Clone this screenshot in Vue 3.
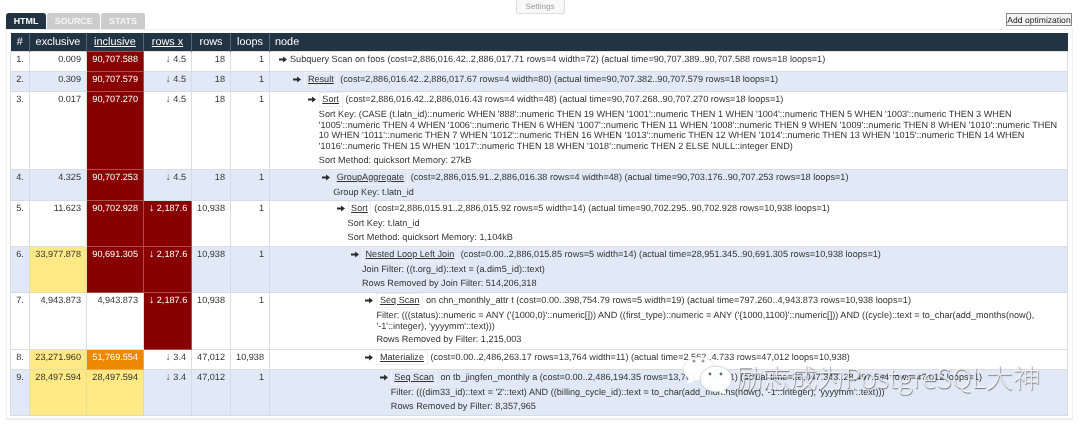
<script setup>
const rows = [
  { n: '1.', ex: '0.009', inc: '90,707.588', incC: 'red', rx: '4.5', rows: '18', loops: '1', lvl: 0, plain: 'Subquery Scan on foos', info: '(cost=2,886,016.42..2,886,017.71 rows=4 width=72) (actual time=90,707.389..90,707.588 rows=18 loops=1)', details: [], h: 20 },
  { n: '2.', alt: true, ex: '0.309', inc: '90,707.579', incC: 'red', rx: '4.5', rows: '18', loops: '1', lvl: 1, name: 'Result', info: '(cost=2,886,016.42..2,886,017.67 rows=4 width=80) (actual time=90,707.382..90,707.579 rows=18 loops=1)', details: [], h: 20 },
  { n: '3.', ex: '0.017', inc: '90,707.270', incC: 'red', rx: '4.5', rows: '18', loops: '1', lvl: 2, name: 'Sort', info: '(cost=2,886,016.42..2,886,016.43 rows=4 width=48) (actual time=90,707.268..90,707.270 rows=18 loops=1)', details: ["Sort Key: (CASE (t.latn_id)::numeric WHEN '888'::numeric THEN 19 WHEN '1001'::numeric THEN 1 WHEN '1004'::numeric THEN 5 WHEN '1003'::numeric THEN 3 WHEN '1005'::numeric THEN 4 WHEN '1006'::numeric THEN 6 WHEN '1007'::numeric THEN 11 WHEN '1008'::numeric THEN 9 WHEN '1009'::numeric THEN 8 WHEN '1010'::numeric THEN 10 WHEN '1011'::numeric THEN 7 WHEN '1012'::numeric THEN 16 WHEN '1013'::numeric THEN 12 WHEN '1014'::numeric THEN 13 WHEN '1015'::numeric THEN 14 WHEN '1016'::numeric THEN 15 WHEN '1017'::numeric THEN 18 WHEN '1018'::numeric THEN 2 ELSE NULL::integer END)", 'Sort Method: quicksort Memory: 27kB'], h: 78 },
  { n: '4.', alt: true, ex: '4.325', inc: '90,707.253', incC: 'red', rx: '4.5', rows: '18', loops: '1', lvl: 3, name: 'GroupAggregate', info: '(cost=2,886,015.91..2,886,016.38 rows=4 width=48) (actual time=90,703.176..90,707.253 rows=18 loops=1)', details: ['Group Key: t.latn_id'], h: 31 },
  { n: '5.', ex: '11.623', inc: '90,702.928', incC: 'red', rx: '2,187.6', rxC: 'red', rows: '10,938', loops: '1', lvl: 4, name: 'Sort', info: '(cost=2,886,015.91..2,886,015.92 rows=5 width=14) (actual time=90,702.295..90,702.928 rows=10,938 loops=1)', details: ['Sort Key: t.latn_id', 'Sort Method: quicksort Memory: 1,104kB'], h: 46 },
  { n: '6.', alt: true, ex: '33,977.878', exC: 'yellow', inc: '90,691.305', incC: 'red', rx: '2,187.6', rxC: 'red', rows: '10,938', loops: '1', lvl: 5, name: 'Nested Loop Left Join', info: '(cost=0.00..2,886,015.85 rows=5 width=14) (actual time=28,951.345..90,691.305 rows=10,938 loops=1)', details: ['Join Filter: ((t.org_id)::text = (a.dim5_id)::text)', 'Rows Removed by Join Filter: 514,206,318'], h: 46 },
  { n: '7.', ex: '4,943.873', inc: '4,943.873', rx: '2,187.6', rxC: 'red', rows: '10,938', loops: '1', lvl: 6, name: 'Seq Scan', info: 'on chn_monthly_attr t (cost=0.00..398,754.79 rows=5 width=19) (actual time=797.260..4,943.873 rows=10,938 loops=1)', details: ["Filter: (((status)::numeric = ANY ('{1000,0}'::numeric[])) AND ((first_type)::numeric = ANY ('{1000,1100}'::numeric[])) AND ((cycle)::text = to_char(add_months(now(), '-1'::integer), 'yyyymm'::text)))", 'Rows Removed by Filter: 1,215,003'], h: 57 },
  { n: '8.', ex: '23,271.960', exC: 'yellow', inc: '51,769.554', incC: 'orange', rx: '3.4', rows: '47,012', loops: '10,938', lvl: 6, name: 'Materialize', info: '(cost=0.00..2,486,263.17 rows=13,764 width=11) (actual time=2.562..4.733 rows=47,012 loops=10,938)', details: [], h: 20 },
  { n: '9.', alt: true, ex: '28,497.594', exC: 'yellow', inc: '28,497.594', incC: 'yellow', rx: '3.4', rows: '47,012', loops: '1', lvl: 7, name: 'Seq Scan', info: 'on tb_jingfen_monthly a (cost=0.00..2,486,194.35 rows=13,764 width=11) (actual time=28,047.343..28,497.594 rows=47,012 loops=1)', details: ["Filter: (((dim33_id)::text = '2'::text) AND ((billing_cycle_id)::text = to_char(add_months(now(), '-1'::integer), 'yyyymm'::text)))", 'Rows Removed by Filter: 8,357,965'], h: 46 }
]
</script>

<template>
  <div class="page">
    <div class="settings-row"><button class="settings">Settings</button></div>
    <div class="tabs-row">
      <div class="tabs">
        <span class="tab active">HTML</span>
        <span class="tab">SOURCE</span>
        <span class="tab">STATS</span>
      </div>
      <button class="add">Add optimization</button>
    </div>
    <div class="panel">
      <table>
        <colgroup>
          <col class="c-num" /><col class="c-time" /><col class="c-time" /><col class="c-rx" /><col class="c-count" /><col class="c-count" /><col />
        </colgroup>
        <thead>
          <tr>
            <th>#</th><th>exclusive</th><th><u>inclusive</u></th><th><u>rows x</u></th><th>rows</th><th>loops</th><th class="left">node</th>
          </tr>
        </thead>
        <tbody>
          <tr v-for="r in rows" :key="r.n" :class="{ alt: r.alt }" :style="{ height: r.h + 'px' }">
            <td class="num">{{ r.n }}</td>
            <td :class="r.exC">{{ r.ex }}</td>
            <td :class="r.incC">{{ r.inc }}</td>
            <td :class="r.rxC"><span class="down">↓</span> {{ r.rx }}</td>
            <td>{{ r.rows }}</td>
            <td>{{ r.loops }}</td>
            <td class="node">
              <div :style="{ paddingLeft: r.lvl * 14.4 + 'px' }">
                <div class="line">
                  <svg class="arrow" viewBox="0 0 9 7" width="8" height="7"><path d="M0 2.4h4.6V0L9 3.5 4.6 7V4.6H0z" fill="#2b2b2b" /></svg>
                  <template v-if="r.plain">{{ r.plain }} {{ r.info }}</template>
                  <template v-else><span class="name">{{ r.name }}</span>{{ r.info }}</template>
                </div>
                <p v-for="d in r.details" :key="d" class="detail">{{ d }}</p>
              </div>
            </td>
          </tr>
        </tbody>
      </table>
    </div>
    <div class="mark">
      <svg width="56" height="42" viewBox="0 0 56 42" class="bubble">
        <ellipse cx="19" cy="14" rx="16" ry="12" fill="rgba(255,255,255,.95)" stroke="#ccc" stroke-width=".5" />
        <path d="M9 22l-2 7 8-4z" fill="rgba(255,255,255,.95)" />
        <ellipse cx="36" cy="24" rx="16" ry="13" fill="rgba(255,255,255,.97)" stroke="#aaa" stroke-width=".5" />
        <path d="M44 34l3 6-8-3z" fill="rgba(255,255,255,.97)" />
        <circle cx="14" cy="6" r="1.5" fill="#999" /><circle cx="23" cy="6" r="1.5" fill="#999" />
        <circle cx="30" cy="19" r="1.4" fill="#666" /><circle cx="41" cy="19" r="1.4" fill="#666" />
      </svg>
      <span class="mark-text">励志成为PostgreSQL大神</span>
    </div>
  </div>
</template>

<style scoped>
.page {
  position: relative;
  width: 1080px;
  height: 426px;
  overflow: hidden;
  font-family: "Liberation Sans", Arial, sans-serif;
  font-size: 9.13px;
  text-rendering: geometricPrecision;
  color: #333;
  background: #fff;
  filter: blur(0.35px);
}
.settings-row {
  display: flex;
  justify-content: center;
  height: 13px;
}
.settings {
  width: 49px;
  height: 15px;
  margin-top: -1px;
  padding: 0;
  border: 1px solid #ddd;
  border-radius: 2px;
  background: #f8f8f8;
  color: #999;
  font: 8px "Liberation Sans", sans-serif;
  text-rendering: geometricPrecision;
}
.tabs-row {
  display: flex;
  justify-content: space-between;
  align-items: flex-end;
  height: 16px;
  padding: 0 8px 0 6px;
}
.tabs {
  display: flex;
  gap: 1px;
}
.tab {
  height: 16px;
  padding: 0 7.7px;
  border-radius: 3px 3px 0 0;
  background: #ccc;
  color: #f4f4f4;
  font-weight: 700;
  font-size: 8.9px;
  line-height: 16px;
}
.tab.active {
  background: #223344;
  color: #fff;
}
.add {
  width: 66px;
  height: 13px;
  margin-bottom: 3px;
  padding: 0;
  border: 1px solid #888;
  background: #f4f4f4;
  color: #222;
  font: 8.57px "Liberation Sans", sans-serif;
  text-rendering: geometricPrecision;
}
.panel {
  width: 1067px;
  height: 391px;
  margin-left: 6px;
  padding: 3px 4px 4px 3px;
  box-sizing: border-box;
  border: 1px solid #eee;
  border-bottom-width: 2px;
}
table {
  width: 1058px;
  table-layout: fixed;
  border-collapse: collapse;
}
.c-num { width: 19px; }
.c-time { width: 57px; }
.c-rx { width: 48px; }
.c-count { width: 39px; }
th {
  height: 18px;
  padding: 0;
  background: #223344;
  color: #fff;
  font-weight: 400;
  font-size: 10.9px;
  text-align: center;
  border-left: 1px solid #55667a;
}
th:first-child { border-left: 0; }
th.left { text-align: left; padding-left: 5px; }
td {
  padding: 1px 5px 0;
  vertical-align: top;
  text-align: right;
  line-height: 13px;
  border: 1px solid #ddd;
  white-space: nowrap;
  overflow: hidden;
}
.alt td { background: #e1e9f6; border-color: #d4dce8; }
td.num { padding: 1px 0 0; text-align: center; }
td.red { background: #880000 !important; color: #fff; border-color: #a85050; }
td.orange { background: #ee8800 !important; color: #fff; border-color: #f0a850; }
td.yellow { background: #ffe985 !important; border-color: #e8dc9c; }
.down { color: #666; font-size: 10.5px; }
td.red .down { color: #fff; }
td.node {
  padding: 1px 5px 0 9px;
  text-align: left;
  white-space: normal;
}
.line { white-space: nowrap; }
.arrow { margin-right: 3px; vertical-align: -0.5px; }
.name {
  display: inline-block;
  margin: -1px 3px -1px 0;
  padding: 0 2.5px;
  border: 1px solid #eef0f4;
  line-height: 13px;
  text-decoration: underline;
}
.detail {
  margin: 3px 0 0 11px;
  line-height: 10.67px;
}
.mark {
  position: absolute;
  left: 680px;
  top: 355px;
  display: flex;
  align-items: center;
  gap: 0;
  pointer-events: none;
}
.mark-text {
  font-family: "Noto Sans CJK SC", "Noto Sans", sans-serif;
  font-weight: 300;
  font-size: 27px;
  letter-spacing: 0.15px;
  color: rgba(255, 255, 255, 0.8);
  text-shadow: 0.5px 0.5px 1px rgba(0, 0, 0, 0.5);
}
</style>
